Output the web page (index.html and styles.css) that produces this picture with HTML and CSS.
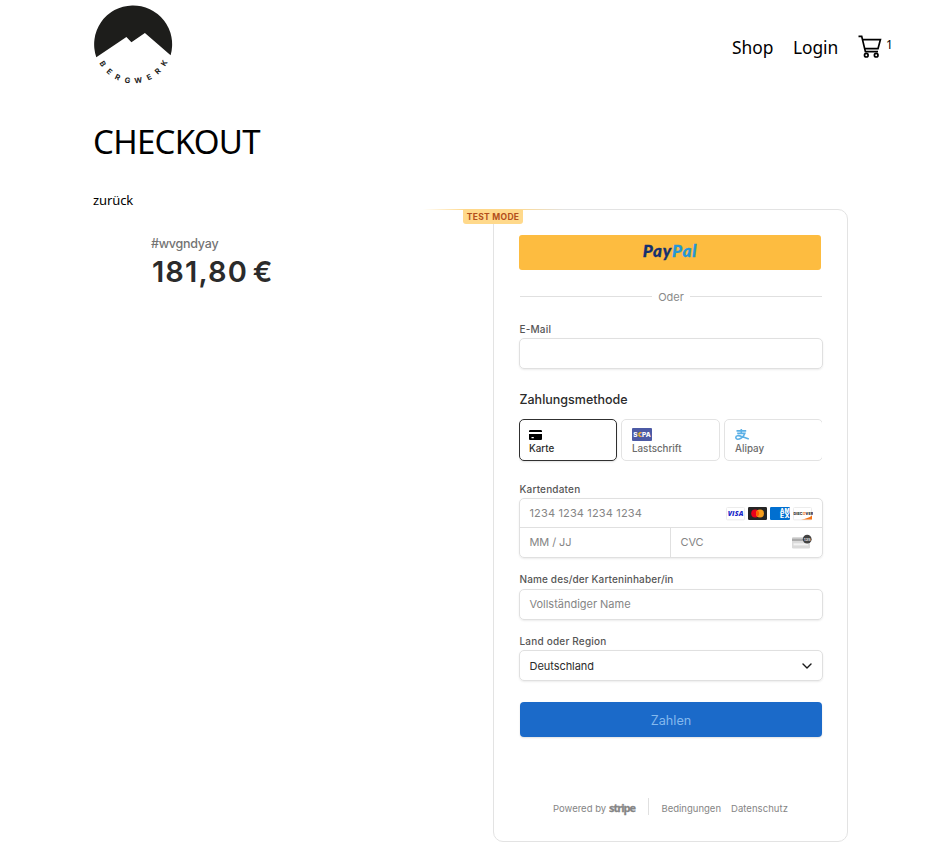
FILE: index.html
```html
<!DOCTYPE html>
<html lang="de">
<head>
<meta charset="utf-8">
<title>Bergwerk – Checkout</title>
<link rel="stylesheet" href="styles.css">
</head>
<body>
<header class="site-header">
  <svg class="logo" width="80" height="84" viewBox="12.6 4 80 84">
    <path fill="#1d1d1b" d="M15.9 56.2A39 39 0 1 1 90.2 54.2L64.5 32 51 41.2 46 36Z"/>
    <g class="logo-text" text-anchor="middle">
      <text transform="rotate(58.5 53 44)" x="53" y="82.4">B</text>
      <text transform="rotate(42 53 44)" x="53" y="82.4">E</text>
      <text transform="rotate(26 53 44)" x="53" y="82.4">R</text>
      <text transform="rotate(9.6 53 44)" x="53" y="82.4">G</text>
      <text transform="rotate(-8 53 44)" x="53" y="82.4">W</text>
      <text transform="rotate(-26 53 44)" x="53" y="82.4">E</text>
      <text transform="rotate(-43 53 44)" x="53" y="82.4">R</text>
      <text transform="rotate(-59.5 53 44)" x="53" y="82.4">K</text>
    </g>
  </svg>
  <nav class="nav">
    <a class="nav-shop">Shop</a>
    <a class="nav-login">Login</a>
    <a class="cart">
      <svg width="24" height="24" viewBox="0 0 24 24" fill="none" stroke="#000" stroke-width="1.7">
        <path d="M.5 1.4H3.7L7.4 16.6H20M4.6 4.7H22.4L20 13.6H6.7"/>
        <circle cx="8.3" cy="20.2" r="1.8"/><circle cx="18.2" cy="20.2" r="1.8"/>
      </svg>
      <span class="count">1</span>
    </a>
  </nav>
</header>
<main class="page">
  <h1>CHECKOUT</h1>
  <a class="back">zurück</a>
  <div class="checkout">
    <section class="summary">
      <div class="order">#wvgndyay</div>
      <div class="total">181,80 €</div>
    </section>
    <section class="card">
      <div class="test-line"></div>
      <div class="test-mode">TEST MODE</div>
      <div class="paypal"><span><b>Pay</b><i>Pal</i></span></div>
      <div class="or"><span>Oder</span></div>
      <label>E-Mail</label>
      <div class="field"></div>
      <h2>Zahlungsmethode</h2>
      <div class="tabs">
        <div class="tab active">
          <svg width="13" height="15" viewBox="0 0 13 15"><path d="M0 4.2Q0 3 1.2 3H11.8Q13 3 13 4.2V5H0ZM0 7H13V12Q13 13 12 13H1Q0 13 0 12ZM2.5 10V11.2H4.8V10Z" fill-rule="evenodd"/></svg>
          <span>Karte</span>
        </div>
        <div class="tab">
          <svg width="20" height="15" viewBox="0 0 20 15"><rect y="1" width="20" height="13" rx="1" fill="#4c5aa5"/><text class="sepa" x="1.3" y="9.7" textLength="17.4" lengthAdjust="spacingAndGlyphs">S<tspan fill="#eeb52e">€</tspan>PA</text></svg>
          <span>Lastschrift</span>
        </div>
        <div class="tab last">
          <svg width="15" height="15" viewBox="0 0 15 15" fill="none" stroke="#5bb0e6" stroke-width="1.6"><path d="M1.5 3.9H11.2M6.3 2V6.4M2.2 6.4H9.8Q8.8 9.4 5.9 11.2C3 13 .8 12.2.8 10.5.9 8.5 3.8 8.2 6.2 9.3L13.8 12"/></svg>
          <span>Alipay</span>
        </div>
      </div>
      <label class="lb-card">Kartendaten</label>
      <div class="card-fields">
        <div class="number">
          <span>1234 1234 1234 1234</span>
          <svg width="87" height="14" viewBox="0 0 87 14">
            <rect x=".5" y=".5" width="18" height="12.4" rx="1" fill="#fff" stroke="#ececec"/>
            <text class="visa" x="1.7" y="9.2" textLength="15.8" lengthAdjust="spacingAndGlyphs">VISA</text>
            <rect x="22" width="19" height="13" rx="1.2" fill="#252525"/>
            <circle cx="29.2" cy="6.4" r="4" fill="#eb001b"/><circle cx="34" cy="6.4" r="4" fill="#f79e1b"/>
            <path d="M31.6 3.2a4 4 0 0 1 0 6.4 4 4 0 0 1 0-6.4" fill="#ff5f00"/>
            <rect x="44" width="20" height="13" rx="1.2" fill="#016fd0"/>
            <text class="amex" x="54" y="5.9" textLength="9.8" lengthAdjust="spacingAndGlyphs">AM</text>
            <text class="amex" x="54" y="10.9" textLength="9.8" lengthAdjust="spacingAndGlyphs">EX</text>
            <rect x="67.5" y=".5" width="18" height="12.4" rx="1" fill="#fff" stroke="#ececec"/>
            <path d="M86 8.5V12.5H75Q82 11.5 86 8.5" fill="#f47216"/>
            <g transform="translate(67.4 7.6)"><text class="discover">DISC<tspan fill="#f47216">O</tspan>VER</text></g>
          </svg>
        </div>
        <div class="expiry"><span>MM / JJ</span></div>
        <div class="cvc"><span>CVC</span>
          <svg width="21" height="16" viewBox="0 0 21 16"><rect x="1" y="3" width="18" height="11.5" rx="1.2" fill="#dadada"/><path d="M1 4.6H19V7H1Z" fill="#aaa"/><path d="M2.5 9.3H17V11.4H2.5Z" fill="#f3f3f3"/><circle cx="16.2" cy="5.2" r="4.4" fill="#424242"/><text class="cvc-no" x="12.8" y="6.9" textLength="6.8" lengthAdjust="spacingAndGlyphs">135</text></svg>
        </div>
      </div>
      <label class="lb-name">Name des/der Karteninhaber/in</label>
      <div class="field name">Vollständiger Name</div>
      <label class="lb-country">Land oder Region</label>
      <div class="field select"><span>Deutschland</span>
        <svg width="10" height="6" viewBox="0 0 10 6" fill="none" stroke="#1a1a1a" stroke-width="1.4" stroke-linecap="round" stroke-linejoin="round"><path d="M1 .9L5 4.9 9 .9"/></svg>
      </div>
      <button class="pay">Zahlen</button>
      <footer class="legal">
        <span class="powered">Powered by</span><b class="stripe">stripe</b>
        <span class="rule"></span>
        <span class="terms">Bedingungen</span><span class="privacy">Datenschutz</span>
      </footer>
    </section>
  </div>
</main>
</body>
</html>
```

FILE: styles.css
```css
* { box-sizing: border-box; }
body { margin: 0; width: 943px; height: 866px; overflow: hidden; background: #fff; color: #000; font-family: "Noto Sans", sans-serif; }
.site-header { display: flex; justify-content: space-between; height: 92px; padding: 5px 51px 0 93px; }
.logo { flex: none; }
.logo-text { font: 700 7.5px Inter, sans-serif; fill: #1d1d1b; }
.nav { display: flex; align-items: flex-start; font-size: 17.4px; line-height: 24px; padding-top: 30px; }
.nav-shop { width: 61px; }
.nav-login { width: 65px; letter-spacing: -.1px; }
.cart { display: flex; }
.count { font-size: 12px; line-height: 19px; margin-left: 4px; width: 6px; }
.page { padding: 0 0 0 93px; }
h1 { margin: 0; padding-top: 27px; height: 98px; font-weight: 400; font-size: 33px; line-height: 46px; letter-spacing: -.7px; }
.back { display: block; height: 19px; line-height: 20px; font-size: 13px; letter-spacing: -.1px; }
.checkout { display: flex; font-family: Inter, sans-serif; color: #30313d; }
.summary { width: 400px; padding: 27px 0 0 58px; }
.order { font-size: 12.5px; line-height: 16px; font-weight: 500; letter-spacing: -.25px; color: #737373; }
.total { font-size: 29px; line-height: 38px; font-weight: 600; letter-spacing: 1.1px; word-spacing: -3.5px; color: #2b2b2b; margin: 1px 0 0 1px; }
.card { position: relative; width: 355px; height: 633px; border: 1px solid #e3e3e3; border-radius: 10px; padding: 25px 24px 0 25px; }
.test-line { position: absolute; left: -71px; top: -1px; width: 142px; height: 1px; background: linear-gradient(90deg, transparent, #ffd88a 30%, #ffd88a 65%, #e3e3e3); }
.test-mode { position: absolute; left: -31px; top: 0; width: 60px; height: 14px; border-radius: 0 0 3px 3px; background: #ffd98b; color: #b3501c; font-size: 8.5px; line-height: 14px; font-weight: 700; text-align: center; letter-spacing: .3px; }
.paypal { width: 302px; height: 35px; border-radius: 3px; background: #fdbc40; text-align: center; font: italic 900 17px/32px Lato, sans-serif; letter-spacing: .9px; color: #15306f; -webkit-text-stroke: .3px; }
.paypal b { font-weight: inherit; }
.paypal i { color: #2597d5; }
.or { display: flex; align-items: center; gap: 6px; height: 17px; margin: 18px 1px 0; font-size: 11px; color: #8a8a8a; }
.or::before, .or::after { content: ""; flex: 1; height: 1px; background: #e0e0e0; }
label { display: block; height: 16px; line-height: 15px; font-size: 10px; font-weight: 500; letter-spacing: .18px; color: #565656; margin-left: .5px; }
.or + label { margin-top: 17px; }
.field { width: 304px; height: 31px; border: 1px solid #e0e0e0; border-radius: 5px; box-shadow: 0 1px 2px rgba(0,0,0,.08); padding-left: 9.5px; line-height: 28px; font-size: 11px; color: #858585; }
h2 { margin: 21px 0 0 .5px; height: 29px; font-size: 12.5px; line-height: 20px; font-weight: 500; color: #2b2b2b; }
.tabs { display: flex; width: 303px; gap: 4px; overflow: hidden; padding-bottom: 4px; }
.tab { flex: none; width: 99px; height: 42px; border: 1px solid #e3e3e3; border-radius: 5px; padding: 7px 0 0 10px; font-size: 9.8px; font-weight: 500; color: #6b6b6b; }
.tab svg { display: block; }
.tab span { display: block; line-height: 13px; }
.tab.active { width: 98px; padding-left: 9px; border-color: #303030; color: #2b2b2b; box-shadow: 0 1px 2px rgba(0,0,0,.12); }
.sepa { font: 800 6px Inter, sans-serif; fill: #fff; }
.visa { font: italic 800 7px "Open Sans", sans-serif; fill: #1a28c8; }
.amex { font: 800 5.5px Inter, sans-serif; fill: #fff; }
.discover { font: 800 3.6px Inter, sans-serif; fill: #222; }
.cvc-no { font: 700 4px Inter, sans-serif; fill: #ddd; }
.lb-card { margin-top: 17px; }
.card-fields { display: grid; grid-template-columns: 150px 1fr; grid-template-rows: 28px 30px; width: 304px; height: 60px; border: 1px solid #e0e0e0; border-radius: 5px; box-shadow: 0 1px 2px rgba(0,0,0,.08); font-size: 11px; color: #858585; }
.card-fields > div { display: flex; justify-content: space-between; align-items: center; padding: 0 10px 0 9.5px; }
.card-fields .number { grid-column: 1 / 3; padding-right: 9px; letter-spacing: .15px; }
.card-fields .number svg { margin-top: 1px; }
.card-fields .expiry, .card-fields .cvc { border-top: 1px solid #e0e0e0; padding-bottom: 2px; letter-spacing: -.1px; }
.cvc { border-left: 1px solid #e0e0e0; }
.lb-name { margin-top: 14px; padding-bottom: 1px; height: 17px; letter-spacing: .13px; }
.lb-country { margin-top: 14px; letter-spacing: .2px; }
.name { letter-spacing: -.02px; }
.select { display: flex; align-items: center; justify-content: space-between; padding-right: 10px; color: #2b2b2b; letter-spacing: -.05px; }
.pay { display: block; width: 302px; height: 35px; margin: 21px 0 0 1px; border: 0; border-radius: 4px; background: #1b6ac9; color: #84b9ee; font: 400 12.7px/37px Inter, sans-serif; padding: 0; box-shadow: 0 1px 2px rgba(0,0,0,.12); }
.legal { display: flex; align-items: center; height: 18px; margin: 60px 0 0 34px; white-space: nowrap; font-size: 9.5px; line-height: 20px; color: #858585; }
.powered { width: 56px; padding-top: 5px; }
.stripe { width: 39px; padding-top: 3px; font: 700 11px/18px "Open Sans", sans-serif; letter-spacing: -1px; color: #858585; -webkit-text-stroke: .3px #858585; }
.rule { width: 1px; height: 17px; background: #e0e0e0; }
.terms { margin-left: 12.5px; width: 69.5px; padding-top: 5px; }
.privacy { padding-top: 5px; letter-spacing: .05px; }
```
